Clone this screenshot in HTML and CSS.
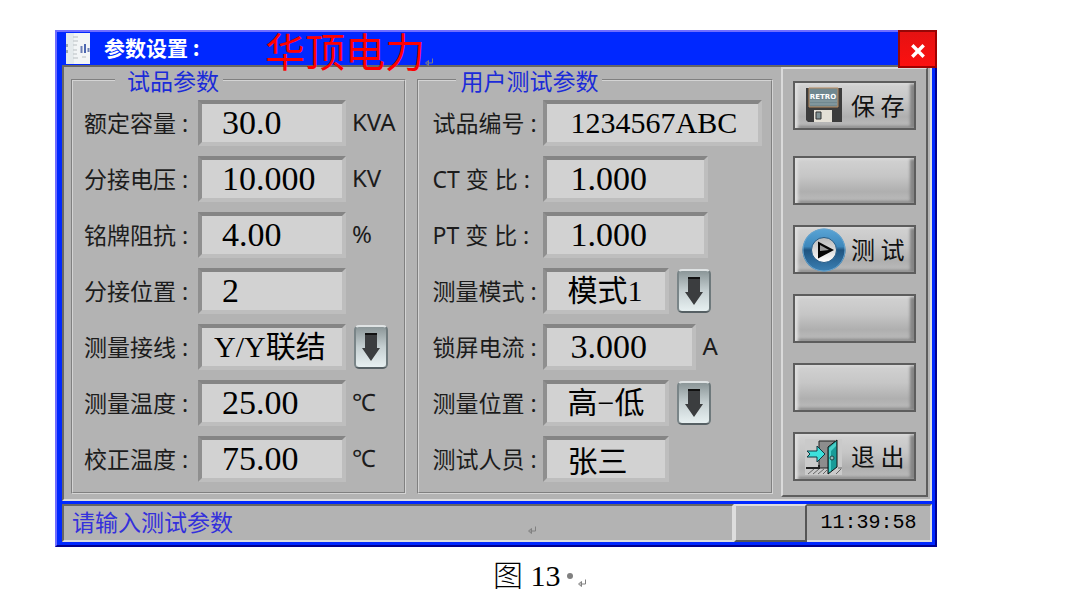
FILE: index.html
```html
<!DOCTYPE html>
<html lang="zh-CN">
<head>
<meta charset="utf-8">
<title>参数设置</title>
<link rel="stylesheet" href="styles.css">
</head>
<body>
<svg class="defs" aria-hidden="true">
  <defs>
    <linearGradient id="ring" x1="0" y1="0" x2="0" y2="1">
      <stop offset="0" stop-color="#5aa5d6"/><stop offset="0.42" stop-color="#3d87bb"/>
      <stop offset="0.5" stop-color="#1f5480"/><stop offset="1" stop-color="#3b80b4"/>
    </linearGradient>
    <linearGradient id="disc" x1="0" y1="0" x2="0" y2="1">
      <stop offset="0" stop-color="#b8b8b8"/><stop offset="1" stop-color="#ffffff"/>
    </linearGradient>
    <symbol id="down" viewBox="0 0 18 28"><path d="M3 1h12v14h3L9 28 0 15h3z" fill="#3b3d3f"/><path d="M3 1h12" stroke="#111" stroke-width="2"/></symbol>
    <symbol id="pilcrow" viewBox="0 0 8 8"><path d="M7.500 0.500v4.500H1.500M3.500 2.500v5L0.500 5z" fill="none" stroke="#808080" stroke-width="1"/></symbol>
  </defs>
</svg>
<main class="window">
  <header class="titlebar">
    <svg class="app-icon" viewBox="0 0 24 31" aria-hidden="true">
      <rect width="24" height="31" fill="#e4eaec"/><path d="M8 0h16v31H8z" fill="#f2f5f6"/>
      <path d="M7 4h5M7 8h5M7 12h4M7 17h4M7 21h4M7 25h5M16 24h4" stroke="#b9bfc2"/>
      <path d="M1 11v3M1 17v3" stroke="#567" stroke-width="1"/>
      <path d="M15.500 13v7M22.500 15v4" stroke="#6c7fb4" stroke-width="2"/><path d="M19 11v9" stroke="#4b66b0" stroke-width="2"/>
    </svg>
    <h1 class="title">参数设置 :</h1>
    <div class="brand">华顶电力<svg class="mark"><use href="#pilcrow"/></svg></div>
    <button class="close" type="button" aria-label="关闭"><svg viewBox="0 0 14 14"><path d="M2 2l10 10M12 2L2 12" stroke="#fff" stroke-width="3"/></svg></button>
  </header>
  <form class="panel">
    <fieldset class="group">
      <legend>试品参数</legend>
      <div class="row"><label for="cap">额定容量 :</label><input class="field" id="cap" value="30.0"><span class="unit">KVA</span></div>
      <div class="row"><label for="volt">分接电压 :</label><input class="field" id="volt" value="10.000"><span class="unit">KV</span></div>
      <div class="row"><label for="imp">铭牌阻抗 :</label><input class="field" id="imp" value="4.00"><span class="unit">%</span></div>
      <div class="row"><label for="tap">分接位置 :</label><input class="field" id="tap" value="2"></div>
      <div class="row"><label for="wire">测量接线 :</label><select class="field wide-text" id="wire"><option>Y/Y联结</option></select><button class="drop" type="button" aria-label="选择测量接线"><svg><use href="#down"/></svg></button></div>
      <div class="row"><label for="temp">测量温度 :</label><input class="field" id="temp" value="25.00"><span class="unit">℃</span></div>
      <div class="row"><label for="ctemp">校正温度 :</label><input class="field" id="ctemp" value="75.00"><span class="unit">℃</span></div>
    </fieldset>
    <fieldset class="group user">
      <legend>用户测试参数</legend>
      <div class="row"><label for="sn">试品编号 :</label><input class="field long" id="sn" value="1234567ABC"></div>
      <div class="row"><label for="ct">CT 变 比 :</label><input class="field medium" id="ct" value="1.000"></div>
      <div class="row"><label for="pt">PT 变 比 :</label><input class="field medium" id="pt" value="1.000"></div>
      <div class="row"><label for="mode">测量模式 :</label><select class="field short" id="mode"><option>模式1</option></select><button class="drop" type="button" aria-label="选择测量模式"><svg><use href="#down"/></svg></button></div>
      <div class="row"><label for="lock">锁屏电流 :</label><input class="field mid" id="lock" value="3.000"><span class="unit">A</span></div>
      <div class="row"><label for="pos">测量位置 :</label><select class="field short" id="pos"><option>高−低</option></select><button class="drop" type="button" aria-label="选择测量位置"><svg><use href="#down"/></svg></button></div>
      <div class="row"><label for="person">测试人员 :</label><input class="field short" id="person" value="张三"></div>
    </fieldset>
    <div class="sidebar">
      <button class="action first" type="button">
        <svg class="icon" viewBox="0 0 44 44" aria-hidden="true">
          <path d="M4 4h36v34H6l-2-2z" fill="#3c3c3c"/>
          <path d="M7 4h29v19H7z" fill="#708890" stroke="#b98a5e"/>
          <path d="M8 17h27M8 20h27" stroke="#91a5aa"/>
          <text x="21" y="15" class="retro">RETRO</text>
          <path d="M12 26h18v12H12z" fill="#e4e0d6"/><path d="M14 28h5v7h-5z" fill="#829396" stroke="#333"/>
        </svg>
        <span>保 存</span>
      </button>
      <button class="action" type="button" aria-label="备用一"></button>
      <button class="action" type="button">
        <svg class="icon" viewBox="0 0 44 44" aria-hidden="true">
          <circle cx="22" cy="22" r="21.500" fill="url(#ring)"/><circle cx="22" cy="22" r="21" fill="none" stroke="#68a4cd"/>
          <circle cx="22" cy="22" r="12.500" fill="url(#disc)" stroke="#235b87"/>
          <path d="M16 13.500v17L32 22z" fill="#050505"/><path d="M18 17v6l9-1z" fill="#999"/>
        </svg>
        <span>测 试</span>
      </button>
      <button class="action" type="button" aria-label="备用二"></button>
      <button class="action" type="button" aria-label="备用三"></button>
      <button class="action" type="button">
        <svg class="icon" viewBox="0 0 44 44" aria-hidden="true">
          <path d="M3 4h37v36H3z" fill="#cacaca"/>
          <path d="M17 6h16v27H17z" fill="#8d8d8d" stroke="#222"/>
          <path d="M4 33h13v-3" fill="none" stroke="#222" stroke-width="2"/>
          <path d="M6 39l6-5M11 39l6-5M16 39l6-5M21 39l4-4M34 39l5-5M36 33h4" stroke="#666"/>
          <path d="M26 12l9-7v27l-9 7z" fill="#189b98" stroke="#111"/><path d="M27 13l7-6v4l-5 5v20l-2 1z" fill="#48cfc9"/>
          <circle cx="30" cy="23" r="2" fill="#9bb" stroke="#244"/>
          <path d="M5 16h10v-5l8 8-8 8v-5H5l3-3z" fill="#3de1dc" stroke="#103840" />
        </svg>
        <span>退 出</span>
      </button>
    </div>
  </form>
  <footer class="status">
    <div class="message"><span>请输入测试参数</span><svg class="mark"><use href="#pilcrow"/></svg></div>
    <div class="slot"></div>
    <time class="clock">11:39:58</time>
  </footer>
</main>
<p class="caption">图 13<span class="dot"></span><svg class="mark"><use href="#pilcrow"/></svg></p>
</body>
</html>
```
FILE: styles.css
```css
* { box-sizing: border-box; }
body {
  margin: 0;
  padding: 30px 133px 0 55px;
  background: #fff;
  color: #1c1c1c;
  font-family: "Noto Sans", "Noto Sans CJK SC", sans-serif;
}
.defs { position: absolute; width: 0; height: 0; }
.window {
  background: #0028ff;
  border: 2px solid;
  border-color: #706dff #000090 #000090 #706dff;
  padding: 0 3px 3px 5px;
}
.titlebar {
  position: relative;
  display: flex;
  align-items: center;
  gap: 14px;
  height: 33px;
  padding-left: 4px;
}
.app-icon { width: 24px; height: 31px; }
.title {
  margin: 0;
  padding-bottom: 4px;
  color: #fff;
  font: bold 21px/28px "Noto Sans CJK SC", sans-serif;
}
.brand {
  position: absolute;
  left: 203px;
  top: 2px;
  display: flex;
  align-items: flex-end;
  color: #f00;
  font: 40px/40px "Liberation Serif", "Noto Sans CJK SC", serif;
}
.mark { width: 8px; height: 8px; flex: none; }
.brand .mark { margin: 0 0 8px; }
.close {
  position: absolute;
  right: -5px;
  top: -2px;
  width: 39px;
  height: 38px;
  display: grid;
  place-items: center;
  padding: 4px 0 0;
  border: 2px solid;
  border-color: #970707 #a00000 #a00000 #970707;
  background: linear-gradient(#e51212, #fb1010);
}
.close svg { width: 16px; height: 16px; }
.panel {
  display: grid;
  grid-template-columns: minmax(0, 335fr) minmax(0, 358fr) 147px;
  gap: 8px;
  padding: 0 2px 2px 7px;
  background: #b3b3b3;
  border: 2px solid;
  border-color: #666 #ddd #ddd #666;
}
.group {
  min-width: 0;
  margin: 3px 0 3px;
  padding: 10px 0 9px 11px;
  border: 2px groove #d4d4d4;
  display: flex;
  flex-direction: column;
  gap: 10px;
}
.user { margin-left: 3px; padding-left: 13px; }
legend {
  margin-left: 31px;
  padding: 0 4px 0 12px;
  color: #1b2bd8;
  font: 23px/20px "Noto Sans CJK SC", sans-serif;
}
.user legend { margin-left: 24px; padding-left: 4px; }
.row { display: flex; align-items: center; height: 46px; }
label {
  flex: none;
  width: 114px;
  white-space: nowrap;
  font: 23px/40px "Noto Sans", "Noto Sans CJK SC", sans-serif;
}
.user label { width: 111px; }
.field {
  appearance: none;
  flex: 0 1 148px;
  min-width: 0;
  height: 46px;
  margin: 0;
  padding: 0 0 0 20px;
  border: 4px solid;
  border-color: #858585 #bebebe #bebebe #8f8f8f;
  border-radius: 0;
  background: #d2d2d2;
  color: #000;
  font: 34px/38px "Liberation Serif", "Noto Sans CJK SC", serif;
}
.wide-text { padding-left: 12px; font-size: 30px; }
.user .field { padding-left: 23px; }
.user .long { flex-basis: 219px; font-size: 30px; }
.user .medium { flex-basis: 165px; }
.user .mid { flex-basis: 153px; }
.user .short { flex-basis: 126px; padding-left: 20px; font-size: 30px; }
.unit { margin-left: 6px; padding-bottom: 2px; font-size: 24px; line-height: 40px; }
.drop {
  flex: none;
  width: 34px;
  height: 44px;
  margin-left: 8px;
  padding: 0;
  display: grid;
  place-items: center;
  border: 2px solid;
  border-color: #dfe3e4 #6e797c #566064 #7a8588;
  border-radius: 5px;
  background: linear-gradient(#8b9698, #c5cfd1 50%, #e7f0f1);
}
.drop svg { width: 18px; height: 28px; }
.sidebar {
  display: flex;
  flex-direction: column;
  align-items: center;
  gap: 20px;
  padding: 12px 0 14px;
  border: 2px solid;
  border-color: #dadada #5e5e5e #5e5e5e #dadada;
}
.action {
  width: 123px;
  height: 49px;
  display: flex;
  align-items: center;
  gap: 5px;
  padding: 0 0 0 7px;
  border: 2px solid #5d5d5d;
  background: linear-gradient(#d2d2d2, #c6c6c6 40%, #afafaf 75%, #bdbdbd);
  box-shadow: inset 3px 1px 3px #dedede, inset -4px -2px 3px #848484;
  color: #111;
  font: 24px/40px "Noto Sans CJK SC", sans-serif;
  white-space: nowrap;
}
.action span { padding-bottom: 2px; }
.first { margin-bottom: 6px; }
.icon { width: 44px; height: 44px; flex: none; }
.retro { font: bold 7px "DejaVu Sans", sans-serif; fill: #fff; text-anchor: middle; }
.status {
  display: grid;
  grid-template-columns: minmax(0, 1fr) 73px 125px;
  height: 38px;
  margin-top: 3px;
  background: #b3b3b3;
}
.status > * { border: 2px solid; border-color: #666 #ddd #ddd #666; }
.message {
  display: flex;
  align-items: center;
  justify-content: space-between;
  padding: 0 196px 4px 8px;
  color: #3430dc;
  font: 23px/28px "Noto Sans CJK SC", sans-serif;
}
.message .mark { margin-top: 18px; }
.status .slot { border-color: #ddd #555 #555 #ddd; }
.status .clock {
  border-left: 0;
  text-align: center;
  color: #000;
  font: 20px/34px "Liberation Mono", monospace;
}
.caption {
  display: flex;
  align-items: center;
  margin: 8px 0 0;
  padding-left: 438px;
  color: #000;
  font: 300 30px/42px "Liberation Serif", "Noto Sans CJK SC", serif;
}
.dot { width: 6px; height: 6px; margin: 0 5px 0 6px; border-radius: 50%; background: #808080; }
.caption .mark { margin-top: 14px; }
```
